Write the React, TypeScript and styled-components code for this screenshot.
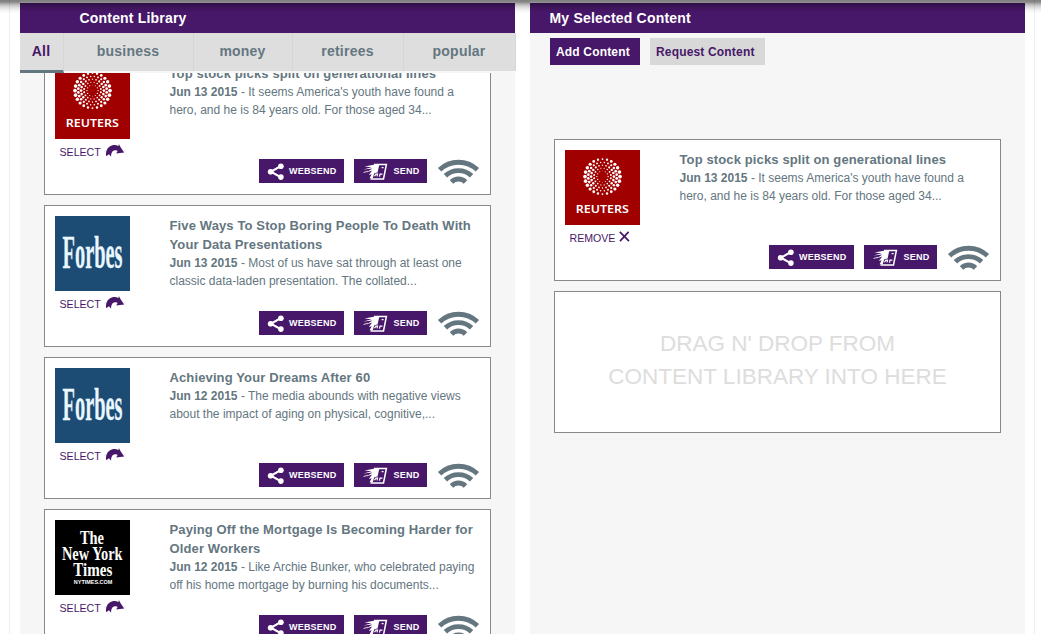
import React from 'react';
import styled, { createGlobalStyle } from 'styled-components';

const purple = '#471769';
const slate = '#647680';

const GlobalStyle = createGlobalStyle`
  * { box-sizing: border-box; }
  body { margin: 0; background: #fff; overflow: hidden; font-family: "Liberation Sans", Arial, sans-serif; }
`;

const Page = styled.div`
  position: relative;
  width: 1041px;
  height: 634px;
  overflow: hidden;
  padding: 0 6px 0 9px;
`;

const TopShade = styled.div`
  position: absolute;
  z-index: 5;
  top: 0;
  left: 0;
  right: 0;
  height: 14px;
  pointer-events: none;
  background: linear-gradient(
    rgba(0, 0, 0, 0.5) 0, rgba(0, 0, 0, 0.47) 2px, rgba(0, 0, 0, 0.38) 3px,
    rgba(0, 0, 0, 0.24) 5px, rgba(0, 0, 0, 0.11) 8px, rgba(0, 0, 0, 0.03) 11px, transparent 14px);
`;

const Frame = styled.div`
  display: flex;
  gap: 15px;
  height: 634px;
  padding: 3px 9px 0 10px;
  border-left: 1px solid #eee;
  border-right: 1px solid #eee;
`;

const Panel = styled.section`
  display: flex;
  flex-direction: column;
  width: 495px;
  flex: none;
  background: #f6f6f6;
`;

const PanelHeader = styled.h2<{ $indent: number }>`
  margin: 0;
  height: 30px;
  flex: none;
  padding-left: ${(p) => p.$indent}px;
  background: ${purple};
  color: #fff;
  font-size: 14px;
  letter-spacing: 0.19px;
  line-height: 30px;
`;

const Tabs = styled.nav`
  display: flex;
  width: 496px;
  height: 40px;
  flex: none;
  align-items: flex-start;
`;

const Tab = styled.div<{ $width: number; $active?: boolean }>`
  width: ${(p) => p.$width}px;
  height: ${(p) => (p.$active ? 40 : 38)}px;
  padding-right: 1px;
  background: #dedede;
  border-right: 1px solid #d6d6d6;
  border-bottom: ${(p) => (p.$active ? `3px solid ${slate}` : 'none')};
  color: ${(p) => (p.$active ? purple : slate)};
  font-size: 14px;
  font-weight: bold;
  letter-spacing: 0.22px;
  line-height: 36px;
  text-align: center;
`;

const Library = styled.div`
  flex: 1;
  min-height: 0;
  overflow: hidden;
`;

const CardList = styled.div<{ $top: number }>`
  display: flex;
  flex-direction: column;
  gap: 10px;
  width: 447px;
  margin: ${(p) => p.$top}px 0 0 24px;
`;

const CardBox = styled.article`
  display: flex;
  gap: 39.5px;
  height: 142px;
  padding: 10px 10px 11px;
  border: 1px solid #888;
  background: #fff;
`;

const Side = styled.div`
  width: 75px;
  flex: none;
  svg { display: block; }
`;

const Action = styled.div`
  display: flex;
  align-items: flex-start;
  gap: 4px;
  padding: 5px 0 0 4.5px;
  color: ${purple};
  font-size: 10.6px;
  line-height: 17px;
`;

const Main = styled.div`
  display: flex;
  flex-direction: column;
  flex: 1;
  min-width: 0;
  color: ${slate};
`;

const Title = styled.h3`
  margin: 0;
  font-size: 13px;
  letter-spacing: 0.125px;
  line-height: 19px;
`;

const Summary = styled.p`
  margin: 0;
  font-size: 12px;
  line-height: 18px;
`;

const Footer = styled.div`
  display: flex;
  justify-content: flex-end;
  gap: 10px;
  height: 24px;
  margin-top: auto;
`;

const SmallButton = styled.button<{ $width: number }>`
  display: flex;
  align-items: center;
  justify-content: space-between;
  width: ${(p) => p.$width}px;
  height: 24px;
  padding: 0 7.5px 0 8px;
  border: 0;
  background: ${purple};
  color: #fff;
  font: bold 9px "Liberation Sans", Arial, sans-serif;
  letter-spacing: 0.22px;
`;

const Toolbar = styled.div`
  display: flex;
  gap: 10px;
  padding: 5px 20px 0;
  height: 32px;
`;

const ToolButton = styled.button<{ $primary?: boolean; $width: number }>`
  width: ${(p) => p.$width}px;
  height: 27px;
  padding: 1px 0 0 6px;
  border: 0;
  text-align: left;
  background: ${(p) => (p.$primary ? purple : '#d8d8d8')};
  color: ${(p) => (p.$primary ? '#fff' : purple)};
  font: bold 12px/26px "Liberation Sans", Arial, sans-serif;
  letter-spacing: 0.17px;
`;

const DropZone = styled.div`
  display: flex;
  align-items: center;
  justify-content: center;
  height: 142px;
  padding-bottom: 4px;
  border: 1px solid #888;
  background: #fff;
  color: #ddd;
  font-size: 22.5px;
  line-height: 33px;
  text-align: center;
`;

const rings = [
  { r: 5.6, n: 12, size: 0.6 },
  { r: 8.5, n: 16, size: 0.85 },
  { r: 11.4, n: 20, size: 1.1 },
  { r: 14.3, n: 24, size: 1.15 },
  { r: 17.5, n: 24, size: 1.55 },
];

const ReutersLogo = () => (
  <svg width="75" height="75" viewBox="0 0 75 75">
    <rect width="75" height="75" fill="#a00000" />
    <g fill="#fff">
      {rings.map((ring, k) =>
        Array.from({ length: ring.n }, (_, i) => {
          const a = ((i + (k % 2) / 2) / ring.n) * Math.PI * 2;
          const size = ring.size * (0.6 + 0.6 * Math.abs(Math.cos(a)));
          return (
            <circle key={`${k}-${i}`} cx={37.5 + ring.r * Math.cos(a)} cy={26.6 + ring.r * Math.sin(a)} r={size} />
          );
        })
      )}
      <text x="10.8" y="63" fontFamily="'Noto Sans', sans-serif" fontWeight="600" fontSize="11.2" textLength="53" lengthAdjust="spacingAndGlyphs">
        REUTERS
      </text>
    </g>
  </svg>
);

const ForbesLogo = () => (
  <svg width="75" height="75" viewBox="0 0 75 75">
    <rect width="75" height="75" fill="#1c4b74" />
    <text x="7.5" y="52.3" fill="#e9f7ff" stroke="#e9f7ff" strokeWidth="0.3" fontFamily="'Liberation Serif', serif" fontWeight="bold" fontSize="46" textLength="60" lengthAdjust="spacingAndGlyphs">
      Forbes
    </text>
  </svg>
);

const TimesLogo = () => (
  <svg width="75" height="75" viewBox="0 0 75 75">
    <rect width="75" height="75" fill="#000" />
    <g fill="#fff" fontFamily="'Liberation Serif', serif" fontWeight="bold">
      <text x="25" y="24.3" fontSize="18" textLength="24" lengthAdjust="spacingAndGlyphs">The</text>
      <text x="7" y="40.3" fontSize="18" textLength="60.5" lengthAdjust="spacingAndGlyphs">New York</text>
      <text x="18.3" y="56.3" fontSize="18" textLength="39" lengthAdjust="spacingAndGlyphs">Times</text>
      <text x="18.8" y="63.6" fontSize="5.3" fontFamily="'Liberation Sans', sans-serif" textLength="38.5" lengthAdjust="spacingAndGlyphs">
        NYTIMES.COM
      </text>
    </g>
  </svg>
);

const SelectArrow = () => (
  <svg width="20" height="14" viewBox="0 0 20 14" fill={purple}>
    <path d="M1.200 12.300C0 6 4 1.200 9.200 1.100c1.700 0 2.800.3 4 1.100L14 .2l1.600 3.100 3.600 5.200-8 .9 1.500-2.600C9.300 5.300 5.900 7 6.100 12.700L4 10.200Z" />
  </svg>
);

const CrossIcon = () => (
  <svg width="11" height="13" viewBox="0 0 11 13" fill="none" stroke={purple} strokeWidth="1.700">
    <path d="M.8 1.900 10 11.200M9.600 1.900 1 11.200" />
  </svg>
);

const ShareIcon = () => (
  <svg width="18" height="18" viewBox="0 0 18 18" fill="#fff">
    <path d="M14 4 4 9.700l10 5.700" fill="none" stroke="#fff" strokeWidth="2.100" />
    <circle cx="3.600" cy="9.700" r="2.800" />
    <circle cx="13.900" cy="4.200" r="2.800" />
    <circle cx="13.900" cy="15.100" r="2.800" />
  </svg>
);

const SendIcon = () => (
  <svg width="26" height="18" viewBox="0 0 26 18">
    <path d="M12 2.500h12.400l-2.900 14.400H8.500" fill="none" stroke="#fff" strokeWidth="1.500" />
    <path d="M13 2.500h4.300l-1.700 8-3.300.8-1.600 4.900H7.600L9.600 12.200l-2.800.8 3.400-4.500-5.700 1.900L10.300 6.500 1.500 7.600l8-2.400L2.500 4.500Z" fill="#fff" />
    <path d="M19.600 5.600h2M12.500 14.300l1.400-2.200h1.600l-.5 2.200m2.500.3.500-2.500h2.400" fill="none" stroke="#fff" strokeWidth="1.200" />
    <path d="m1.500 10.500 4.500-1.300" stroke="#fff" strokeWidth=".8" />
  </svg>
);

const WifiIcon = () => (
  <svg width="43" height="25" viewBox="0 0 43 25" fill="none" stroke={slate} strokeWidth="4.900">
    <path d="M2.600 10.700a27.500 27.500 0 0 1 37.800 0" />
    <path d="M8.400 16.800a19.300 19.300 0 0 1 26.200 0" />
    <path d="M14.500 22.900a10 10 0 0 1 14 0" />
  </svg>
);

type Source = 'reuters' | 'forbes' | 'times';
const logos: Record<Source, () => React.ReactElement> = {
  reuters: ReutersLogo,
  forbes: ForbesLogo,
  times: TimesLogo,
};

interface Article {
  source: Source;
  title: string;
  date: string;
  text: string;
}

const articles: Article[] = [
  {
    source: 'reuters',
    title: 'Top stock picks split on generational lines',
    date: 'Jun 13 2015',
    text: "It seems America's youth have found a hero, and he is 84 years old. For those aged 34...",
  },
  {
    source: 'forbes',
    title: 'Five Ways To Stop Boring People To Death With Your Data Presentations',
    date: 'Jun 13 2015',
    text: 'Most of us have sat through at least one classic data-laden presentation. The collated...',
  },
  {
    source: 'forbes',
    title: 'Achieving Your Dreams After 60',
    date: 'Jun 12 2015',
    text: 'The media abounds with negative views about the impact of aging on physical, cognitive,...',
  },
  {
    source: 'times',
    title: 'Paying Off the Mortgage Is Becoming Harder for Older Workers',
    date: 'Jun 12 2015',
    text: 'Like Archie Bunker, who celebrated paying off his home mortgage by burning his documents...',
  },
];

const Card = ({ article, selected }: { article: Article; selected?: boolean }) => {
  const Logo = logos[article.source];
  return (
    <CardBox>
      <Side>
        <Logo />
        <Action>
          {selected ? 'REMOVE' : 'SELECT'}
          {selected ? <CrossIcon /> : <SelectArrow />}
        </Action>
      </Side>
      <Main>
        <Title>{article.title}</Title>
        <Summary>
          <b>{article.date}</b> - {article.text}
        </Summary>
        <Footer>
          <SmallButton $width={85}>
            <ShareIcon />
            WEBSEND
          </SmallButton>
          <SmallButton $width={73}>
            <SendIcon />
            SEND
          </SmallButton>
          <WifiIcon />
        </Footer>
      </Main>
    </CardBox>
  );
};

export default function App() {
  return (
    <Page>
      <GlobalStyle />
      <TopShade />
      <Frame>
        <Panel>
          <PanelHeader $indent={59.5}>Content Library</PanelHeader>
          <Tabs>
            <Tab $width={44} $active>All</Tab>
            <Tab $width={130}>business</Tab>
            <Tab $width={99}>money</Tab>
            <Tab $width={111}>retirees</Tab>
            <Tab $width={112}>popular</Tab>
          </Tabs>
          <Library>
            <CardList $top={-20}>
              {articles.map((a) => (
                <Card key={a.title} article={a} />
              ))}
            </CardList>
          </Library>
        </Panel>
        <Panel>
          <PanelHeader $indent={19.5}>My Selected Content</PanelHeader>
          <Toolbar>
            <ToolButton $width={90} $primary>Add Content</ToolButton>
            <ToolButton $width={115}>Request Content</ToolButton>
          </Toolbar>
          <CardList $top={74}>
            <Card article={articles[0]} selected />
            <DropZone>
              DRAG N' DROP FROM
              <br />
              CONTENT LIBRARY INTO HERE
            </DropZone>
          </CardList>
        </Panel>
      </Frame>
    </Page>
  );
}
